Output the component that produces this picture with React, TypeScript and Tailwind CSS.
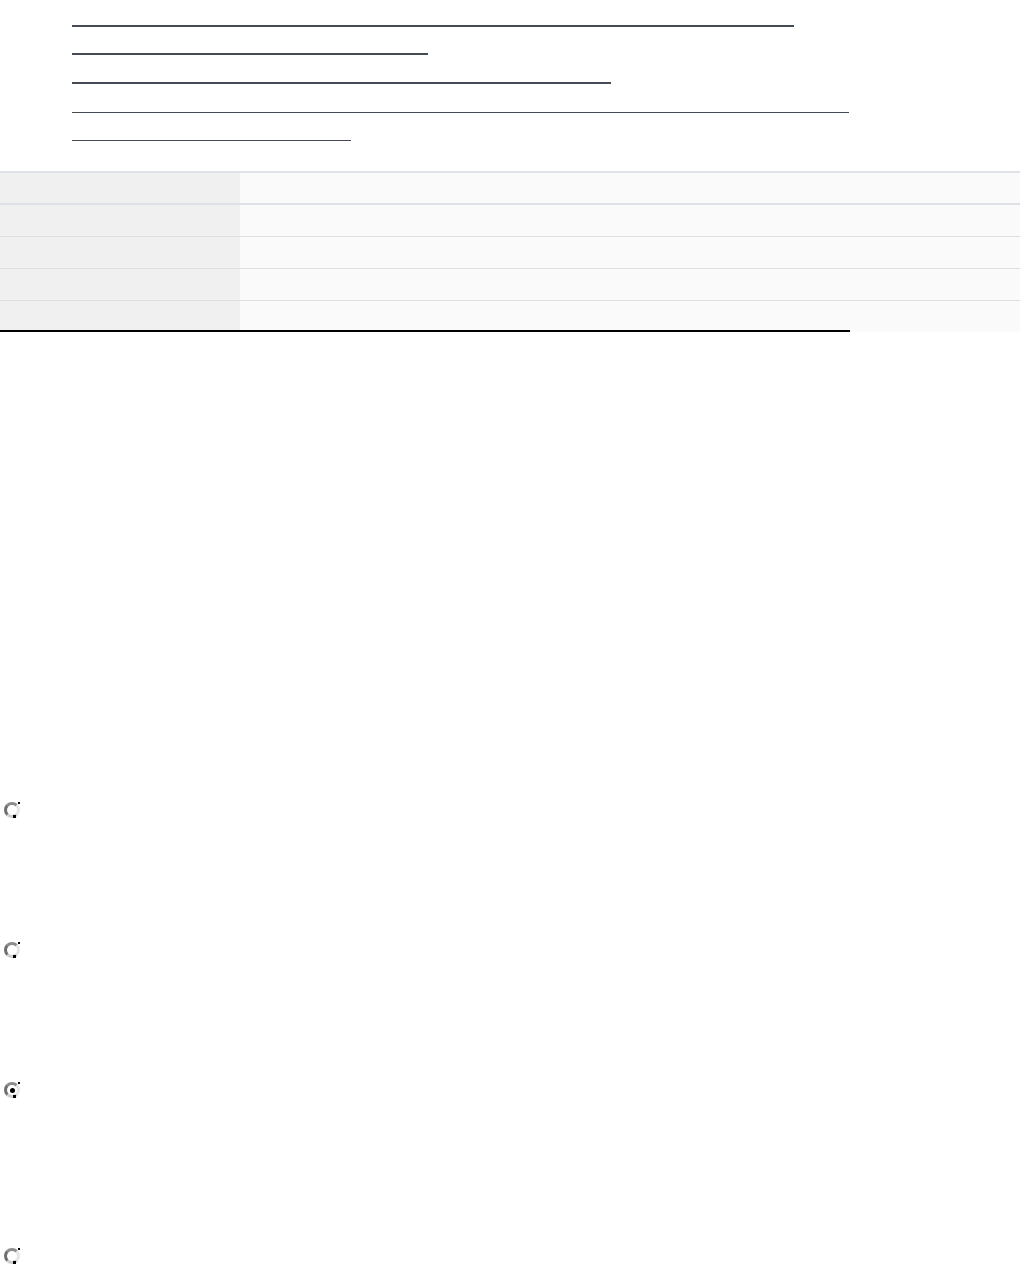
import React from "react";

const lines = [
  { mt: "mt-[25px]", w: "w-[722px]", h: "h-[2px]" },
  { mt: "mt-[26px]", w: "w-[356px]", h: "h-[2px]" },
  { mt: "mt-[27px]", w: "w-[539px]", h: "h-[2px]" },
  { mt: "mt-[28px]", w: "w-[777px]", h: "h-[1px]" },
  { mt: "mt-[27px]", w: "w-[279px]", h: "h-[1px]" },
];

function Radio({ checked, mt }: { checked?: boolean; mt: string }) {
  return (
    <div className={`${mt} ml-[4px] flex`}>
      <span className="relative flex h-[16px] w-[16px] items-center justify-center rounded-full border-[3px] border-t-[#8c8c8c] border-l-[#6f6f6f] border-b-[#d0d0d0] border-r-[#e6e6e6] bg-white">
        {checked && <span className="h-[5px] w-[5px] rounded-full bg-black" />}
        <span className="absolute -right-[3px] -top-[3px] h-[2px] w-[2px] bg-black" />
        <span className="absolute -bottom-[3px] right-[1px] h-[3px] w-[3px] bg-black" />
      </span>
    </div>
  );
}

export default function App() {
  return (
    <div className="min-h-[1273px] w-[1021px] bg-white font-['Liberation_Sans',sans-serif]">
      <div className="flex flex-col pl-[72px]">
        {lines.map((l, i) => (
          <div key={i} className={`${l.mt} ${l.w} ${l.h} bg-[#444b55]`} />
        ))}
      </div>

      <div className="mt-[30px] w-[1020px]">
        <div className="flex h-[34px] border-y-2 border-[#dee2e6]">
          <div className="w-[240px] bg-[#f0f0f0]" />
          <div className="flex-1 bg-[#fafafa]" />
        </div>
        {[0, 1, 2].map((i) => (
          <div key={i} className="flex h-[32px] border-b border-[#dfdfe3]">
            <div className="w-[240px] bg-[#f0f0f0]" />
            <div className="flex-1 bg-[#fafafa]" />
          </div>
        ))}
        <div className="flex h-[31px]">
          <div className="w-[240px] bg-[#f0f0f0]" />
          <div className="flex-1 bg-[#fafafa]" />
        </div>
      </div>
      <div className="relative -mt-[2px] h-[2px] w-[850px] bg-black" />

      <Radio mt="mt-[470px]" />
      <Radio mt="mt-[124px]" />
      <Radio mt="mt-[124px]" checked />
      <Radio mt="mt-[150px]" />
    </div>
  );
}
